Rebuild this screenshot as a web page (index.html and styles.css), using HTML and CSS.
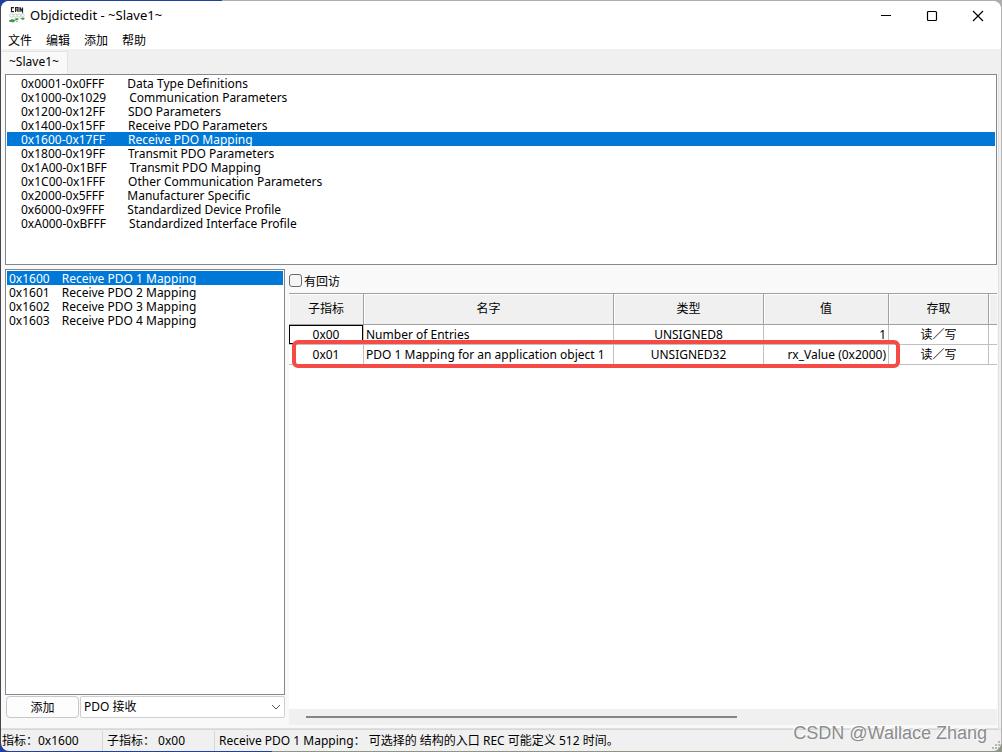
FILE: index.html
```html
<!DOCTYPE html>
<html lang="zh-CN">
<head>
<meta charset="utf-8">
<title>Objdictedit - ~Slave1~</title>
<link rel="stylesheet" href="styles.css">
</head>
<body>
<div class="window">
  <header class="titlebar">
    <svg class="app-icon" width="16" height="16" viewBox="0 0 16 16" aria-hidden="true">
      <path d="M5 .6H2.500v4H5M6.600 5V.6H9V5M6.600 3H9M11 5V.6L13.500 4.800V.4" fill="none" stroke="#222" stroke-width="1.200"/>
      <g fill="none" stroke="#c4ccc6" stroke-width="1">
        <circle cx="2.500" cy="8.500" r="1.700"/><circle cx="6.300" cy="8.500" r="1.700"/><circle cx="10" cy="8.500" r="1.700"/><circle cx="13.500" cy="8.500" r="1.700"/>
      </g>
      <path d="M0 13.500l3-1.500 4 1.500-3 2-4-1zM5 12l3-1 2 1-2 1.500zM11 11.500l3-1 2 1-2 1.500zM7 14l2 .5-1 1z" fill="#3f9a48"/>
    </svg>
    <h1 class="title">Objdictedit - ~Slave1~</h1>
    <div class="window-controls">
      <button type="button" aria-label="最小化"><svg width="12" height="12" viewBox="0 0 12 12"><path d="M1 5.500h10" stroke="#000"/></svg></button>
      <button type="button" aria-label="最大化"><svg width="12" height="12" viewBox="0 0 12 12"><rect x="1.500" y="1.500" width="9" height="9" rx="1" fill="none" stroke="#000" stroke-width="1.200"/></svg></button>
      <button type="button" aria-label="关闭"><svg width="12" height="12" viewBox="0 0 12 12"><path d="M1 1l10 10M11 1L1 11" stroke="#000" stroke-width="1.200"/></svg></button>
    </div>
  </header>
  <nav class="menubar">
    <button type="button">文件</button>
    <button type="button">编辑</button>
    <button type="button">添加</button>
    <button type="button">帮助</button>
  </nav>
  <div class="tabs" role="tablist"><button type="button" class="tab" role="tab" aria-selected="true">~Slave1~</button></div>
  <main class="page">
    <ul class="listbox sections" role="listbox" aria-label="Sections">
      <li role="option"><span>0x0001-0x0FFF</span>Data Type Definitions</li>
      <li role="option"><span>0x1000-0x1029</span>Communication Parameters</li>
      <li role="option"><span>0x1200-0x12FF</span>SDO Parameters</li>
      <li role="option"><span>0x1400-0x15FF</span>Receive PDO Parameters</li>
      <li role="option" aria-selected="true"><span>0x1600-0x17FF</span>Receive PDO Mapping</li>
      <li role="option"><span>0x1800-0x19FF</span>Transmit PDO Parameters</li>
      <li role="option"><span>0x1A00-0x1BFF</span>Transmit PDO Mapping</li>
      <li role="option"><span>0x1C00-0x1FFF</span>Other Communication Parameters</li>
      <li role="option"><span>0x2000-0x5FFF</span>Manufacturer Specific</li>
      <li role="option"><span>0x6000-0x9FFF</span>Standardized Device Profile</li>
      <li role="option"><span>0xA000-0xBFFF</span>Standardized Interface Profile</li>
    </ul>
    <div class="lower">
      <section class="indexes">
        <ul class="listbox entries" role="listbox" aria-label="Indexes">
          <li role="option" aria-selected="true"><span>0x1600</span>Receive PDO 1 Mapping</li>
          <li role="option"><span>0x1601</span>Receive PDO 2 Mapping</li>
          <li role="option"><span>0x1602</span>Receive PDO 3 Mapping</li>
          <li role="option"><span>0x1603</span>Receive PDO 4 Mapping</li>
        </ul>
        <div class="add-row">
          <button type="button" class="add">添加</button>
          <div class="combo">
            <select aria-label="类型"><option>PDO 接收</option></select>
            <svg class="chevron" width="10" height="6" viewBox="0 0 10 6" aria-hidden="true"><path d="M1 1l4 4 4-4" fill="none" stroke="#555"/></svg>
          </div>
        </div>
      </section>
      <section class="detail">
        <label class="callback"><input type="checkbox">有回访</label>
        <div class="grid">
          <table>
            <colgroup><col class="c-sub"><col class="c-name"><col class="c-type"><col class="c-value"><col class="c-access"><col></colgroup>
            <thead><tr><th>子指标</th><th>名字</th><th>类型</th><th>值</th><th>存取</th><th></th></tr></thead>
            <tbody>
              <tr><td class="cursor">0x00</td><td class="left">Number of Entries</td><td>UNSIGNED8</td><td class="right">1</td><td>读／写</td><td></td></tr>
              <tr><td>0x01</td><td class="left">PDO 1 Mapping for an application object 1</td><td>UNSIGNED32</td><td class="right">rx_Value (0x2000)</td><td>读／写</td><td></td></tr>
            </tbody>
          </table>
          <div class="highlight"></div>
        </div>
        <div class="scrollbar"><div class="thumb"></div></div>
      </section>
    </div>
  </main>
  <footer class="statusbar">
    <div class="s-index">指标：0x1600</div>
    <div class="s-sub">子指标： 0x00</div>
    <div class="s-text">Receive PDO 1 Mapping： 可选择的 结构的入口 REC 可能定义 512 时间。</div>
    <svg class="grip" width="10" height="10" viewBox="0 0 10 10" aria-hidden="true"><path d="M7 0h2v2H7zM4 3h2v2H4zM7 3h2v2H7zM1 6h2v2H1zM4 6h2v2H4zM7 6h2v2H7z" fill="#b4b4b4"/></svg>
  </footer>
  <div class="watermark">CSDN @Wallace Zhang</div>
</div>
</body>
</html>
```
FILE: styles.css
```css
* { box-sizing: border-box; }

body {
  margin: 0;
  height: 100vh;
  padding: 1px;
  background:
    linear-gradient(90deg, #1f409c 222px, #adadad 222px) top / 100% 8px no-repeat,
    linear-gradient(90deg, #1f409c 272px, #8f9585 272px) bottom / 100% 8px no-repeat,
    linear-gradient(90deg, #45464e 50%, #b4b4b4 50%);
  font: 12px/14px "Noto Sans", "Noto Sans CJK SC", sans-serif;
  color: #000;
}

button, select, input { font: inherit; color: inherit; margin: 0; }
button { border: 0; background: none; padding: 0; }

.window {
  position: relative;
  display: flex;
  flex-direction: column;
  height: 100%;
  overflow: hidden;
  border-radius: 8px;
  background: #f0f0f0;
}

.titlebar {
  display: flex;
  align-items: center;
  height: 29px;
  padding-left: 8px;
  gap: 5px;
  background: #fff;
}
.app-icon { margin-bottom: 2px; }
.title { flex: 1; margin: 0; padding-bottom: 1px; font-size: 13px; font-weight: 400; }
.window-controls { display: flex; height: 100%; }
.window-controls button { width: 46px; display: grid; place-items: center; }

.menubar { display: flex; gap: 14px; height: 19px; padding-left: 7px; background: #fff; }
.menubar button { line-height: 22px; }

.tabs { height: 25px; padding: 2px 0 0 1px; }
.tab {
  height: 23px;
  padding: 0 8px 2px 7px;
  background: #f9f9f9;
  border: 1px solid #e4e4e4;
  border-width: 1px 1px 0 0;
}

.page {
  flex: 1;
  min-height: 0;
  display: flex;
  flex-direction: column;
  gap: 4px;
  margin-right: 2px;
  padding: 0 1px 3px 4px;
  background: #f9f9f9;
  border-right: 1px solid #e0e0e0;
  border-bottom: 1px solid #e0e0e0;
}

.listbox {
  margin: 0;
  padding: 1px;
  list-style: none;
  background: #fff;
  border: 1px solid #828790;
  white-space: nowrap;
  overflow: hidden;
}
.listbox li { height: 14px; line-height: 16px; }
.listbox li[aria-selected="true"] { background: #0078d7; color: #fff; }
.sections { flex: 0 0 191px; }
.sections li { padding-left: 14px; }
.sections span { margin-right: 23px; }
.entries { flex: 1; }
.entries li { padding-left: 2px; }
.entries span { margin-right: 12px; }

.lower { flex: 1; min-height: 0; display: flex; gap: 4px; }
.indexes { flex: 0 0 280px; display: flex; flex-direction: column; }
.add-row { display: flex; gap: 1px; height: 30px; padding: 1px 0 7px 1px; }
.add {
  width: 73px;
  padding-top: 2px;
  background: #fdfdfd;
  border: 1px solid #c8c8c8;
  border-radius: 4px;
}
.combo { position: relative; flex: 1; display: flex; }
.combo select {
  flex: 1;
  appearance: none;
  padding: 0 3px;
  background: #fff;
  border: 1px solid #cfcfcf;
  border-radius: 2px;
}
.chevron { position: absolute; right: 4px; top: 8px; }

.detail { flex: 1; min-width: 0; display: flex; flex-direction: column; }
.callback { display: flex; align-items: flex-start; gap: 2px; height: 24px; padding-top: 5px; line-height: 16px; }
.callback input {
  appearance: none;
  width: 13px;
  height: 13px;
  border: 1px solid #6a6a6a;
  border-radius: 3px;
  background: #f5f5f5;
}
.grid { position: relative; flex: 1; background: #fff; }
table { width: 100%; table-layout: fixed; border-collapse: separate; border-spacing: 0; }
.c-sub { width: 75px; }
.c-name { width: 250px; }
.c-type { width: 150px; }
.c-value { width: 125px; }
.c-access { width: 100px; }
th {
  height: 32px;
  padding: 0;
  font-weight: 400;
  background: #f0f0f0;
  border: 1px solid #a0a0a0;
  border-left: 0;
  box-shadow: inset 1px 1px #fff;
}
td {
  height: 20px;
  padding: 0 2px;
  text-align: center;
  border: 1px solid #c0c0c0;
  border-width: 0 1px 1px 0;
  white-space: nowrap;
}
th:last-child, td:last-child { border-right: 0; }
.left { text-align: left; }
.right { text-align: right; }
.cursor { box-shadow: inset 1px 1px #000, inset -1px -1px #000; }
.highlight {
  position: absolute;
  left: 3px;
  top: 47px;
  width: 608px;
  height: 28px;
  border: 4px solid #f54a45;
  border-radius: 6px;
}
.scrollbar { height: 16px; padding: 7px 17px; background: #f0f0f0; }
.thumb { width: 64%; height: 2px; background: #858585; }

.statusbar {
  display: flex;
  align-items: center;
  height: 22px;
  border-top: 1px solid #d7d7d7;
  white-space: nowrap;
}
.statusbar div { padding-left: 4px; line-height: 20px; }
.statusbar .s-index { width: 102px; padding-left: 1px; border-right: 1px solid #d7d7d7; }
.statusbar .s-sub { width: 112px; border-right: 1px solid #d7d7d7; }
.s-text { flex: 1; }
.grip { align-self: flex-end; }
.watermark {
  position: absolute;
  right: 14px;
  bottom: 6px;
  font: 18px/24px "Liberation Sans", sans-serif;
  color: #8c8c8c;
  text-shadow: -1px -1px #fff;
}
```
